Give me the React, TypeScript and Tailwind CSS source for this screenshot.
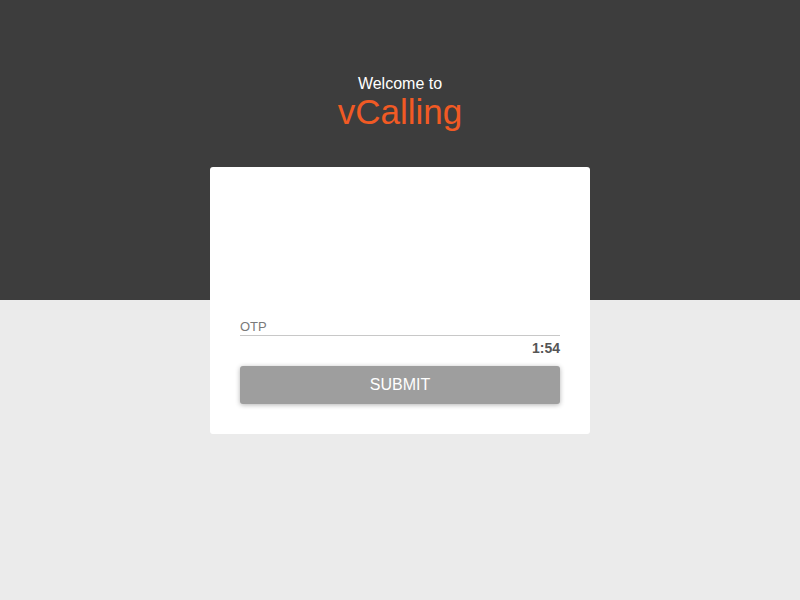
export default function App() {
  return (
    <div
      className="h-[600px] w-full flex flex-col items-center bg-[linear-gradient(to_bottom,#3d3d3d_0px,#3d3d3d_300px,#ebebeb_300px,#ebebeb_100%)]"
      style={{ fontFamily: '"Liberation Sans", Arial, sans-serif' }}
    >
      <div className="pt-[75px] flex flex-col items-center">
        <div className="text-[16px] leading-[18px] text-white">Welcome to</div>
        <div className="text-[35px] leading-[37px] text-[#f15a24]">vCalling</div>
      </div>
      <div className="mt-[37px] w-[380px] bg-white rounded-[3px] px-[30px] pt-[150px] pb-[30px] flex flex-col">
        <input
          placeholder="OTP"
          className="h-[19px] w-full text-[13px] leading-[18px] text-[#333] placeholder:text-[#7a7a7a] border-b border-[#c8c8c8] outline-none bg-transparent p-0"
        />
        <div className="mt-[4px] text-right text-[14px] leading-[16px] font-bold text-[#555]">1:54</div>
        <button className="mt-[10px] h-[38px] w-full rounded-[3px] bg-[#9e9e9e] text-white text-[16px] shadow-[0_1px_5px_rgba(0,0,0,0.3)]">
          SUBMIT
        </button>
      </div>
    </div>
  );
}
